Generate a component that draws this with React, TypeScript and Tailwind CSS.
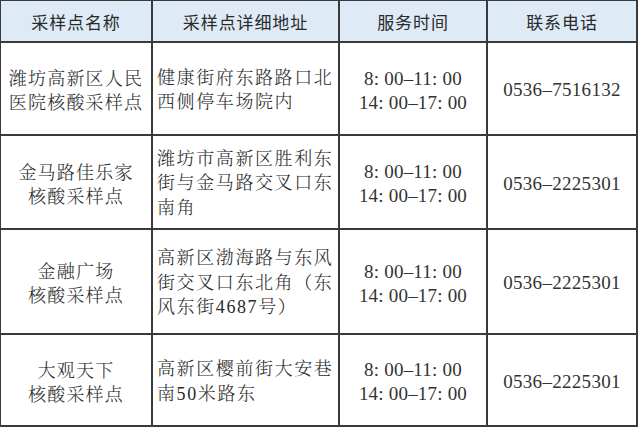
import React from "react";

const serif = "font-['Liberation_Serif','Noto_Serif_CJK_SC','Noto_Sans_CJK_SC',serif]";

type Row = { name: string[]; addr: string[]; phone: string };

const rows: Row[] = [
  { name: ["潍坊高新区人民", "医院核酸采样点"], addr: ["健康街府东路路口北", "西侧停车场院内"], phone: "0536-7516132" },
  { name: ["金马路佳乐家", "核酸采样点"], addr: ["潍坊市高新区胜利东", "街与金马路交叉口东", "南角"], phone: "0536-2225301" },
  { name: ["金融广场", "核酸采样点"], addr: ["高新区渤海路与东风", "街交叉口东北角（东", "风东街4687号）"], phone: "0536-2225301" },
  { name: ["大观天下", "核酸采样点"], addr: ["高新区樱前街大安巷", "南50米路东"], phone: "0536-2225301" },
];

const headers = ["采样点名称", "采样点详细地址", "服务时间", "联系电话"];

export default function App() {
  return (
    <div className="w-[640px] h-[428px] bg-white">
      <div className="w-[638px] bg-[#3a3a3a] pt-[1px] pl-[1px] pr-[2px] pb-[2px] grid grid-cols-[150px_185px_146px_148px] grid-rows-[40px_91px_92px_103px_90px] gap-[2px]">
        {headers.map((h) => (
          <div
            key={h}
            className="bg-[#deeaf6] flex items-center justify-center font-['Noto_Sans_CJK_SC',sans-serif] font-normal text-[17px] tracking-[0.9px] text-[#2a2a2a] pt-[1px]"
          >
            {h}
          </div>
        ))}
        {rows.map((r, i) => (
          <React.Fragment key={i}>
            <div className={`bg-white flex flex-col items-center justify-center pt-[5px] ${serif} font-light text-[18px] leading-[24px] tracking-[1.2px] text-[#2a2a2a]`}>
              {r.name.map((l) => (
                <div key={l} className="whitespace-nowrap">{l}</div>
              ))}
            </div>
            <div className={`bg-white flex flex-col justify-center pl-[4px] pt-[3px] ${serif} font-light text-[18px] leading-[24.5px] tracking-[1.6px] text-[#2a2a2a]`}>
              {r.addr.map((l) => (
                <div key={l} className="whitespace-nowrap">{l}</div>
              ))}
            </div>
            <div className={`bg-white flex flex-col items-center justify-center pt-[4px] ${serif} text-[19px] leading-[24px] tracking-[0.2px] text-[#333]`}>
              <div>8: 00–11: 00</div>
              <div>14: 00–17: 00</div>
            </div>
            <div className={`bg-white flex items-center justify-center pt-[4px] ${serif} text-[19px] tracking-[0.3px] text-[#333]`}>
              {r.phone.replace("-", "–")}
            </div>
          </React.Fragment>
        ))}
      </div>
    </div>
  );
}
